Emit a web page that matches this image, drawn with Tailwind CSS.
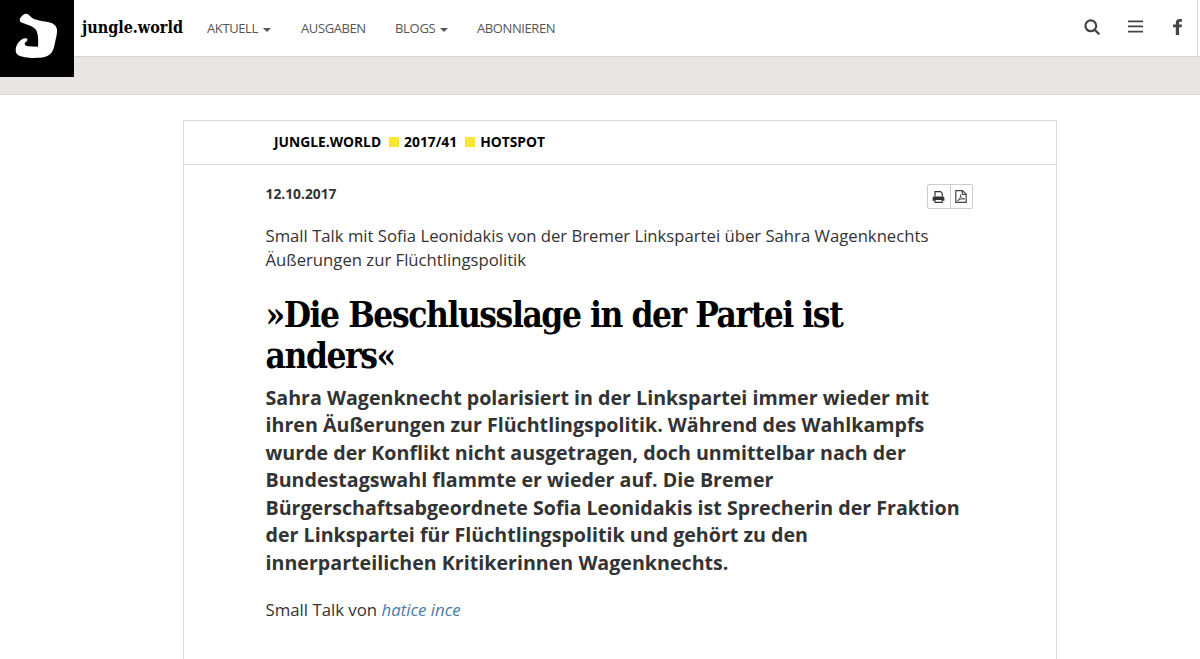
<!DOCTYPE html>
<html lang="de">

<head>
  <meta charset="UTF-8">
  <meta name="viewport" content="width=device-width, initial-scale=1.0">
  <title>jungle.world</title>
  <script src="https://cdn.jsdelivr.net/npm/@tailwindcss/browser@4"></script>
</head>

<body class="h-[659px] overflow-hidden bg-white font-['Open_Sans',sans-serif] text-[#333]">
  <header class="relative h-[95px] border-b border-[#dcd8d8] bg-[#e9e5e5]">
    <nav class="flex h-[57px] items-center border-b border-[#d3d3d3] bg-white pl-[82px] text-[13px] text-[#555]">
      <a class="w-[125px] whitespace-nowrap font-['DejaVu_Serif_Condensed','DejaVu_Serif',serif] text-[16px] font-bold text-black [font-stretch:condensed]">jungle.world</a>
      <a class="flex w-[94px] items-center gap-[5px] pt-px tracking-[-0.4px]">AKTUELL
        <span class="mt-0.5 border-x-4 border-t-4 border-x-transparent border-t-[#555]"></span>
      </a>
      <a class="w-[94px] pt-px tracking-[-0.4px]">AUSGABEN</a>
      <a class="flex w-[82px] items-center gap-[5px] pt-px tracking-[-0.3px]">BLOGS
        <span class="mt-0.5 border-x-4 border-t-4 border-x-transparent border-t-[#555]"></span>
      </a>
      <a class="pt-px tracking-[-0.4px]">ABONNIEREN</a>
      <div class="mr-[2px] ml-auto flex h-full items-center border-r border-[#d3d3d3] pr-[15px] pb-[3px]">
        <svg class="mr-7 size-4" viewBox="0 0 16 16" fill="none" stroke="#444" stroke-width="2.2">
          <circle cx="6.8" cy="6.8" r="5.4" />
          <path d="M10.7 10.7L14.6 14.6" stroke-linecap="round" />
        </svg>
        <svg class="mr-[30px] h-[13px] w-[15px]" viewBox="0 0 15 13" fill="#444">
          <path d="M0 .5h15v1.800H0zM0 5.500h15v1.800H0zM0 10.700h15v1.800H0z" />
        </svg>
        <svg class="h-[16px] w-[9px]" viewBox="0 0 9 16" fill="#444">
          <path d="M9 .2v2.600H7.300C6.300 2.800 6.100 3.300 6.100 4v1.400H9L8.600 8.300H6.100V16H2.800V8.300H0V5.400h2.800V3.700C2.800 1.300 4.300 0 6.500 0 7.600 0 8.600.1 9 .2z" />
        </svg>
      </div>
    </nav>
    <!-- logo hangs over the grey bar -->
    <div class="absolute top-0 left-0 h-[77px] w-[74px] bg-black">
      <svg class="h-full w-full" viewBox="0 0 74 77" fill="#fff">
        <path d="M25.500 13.700C27.500 13.500 29 14.700 30.500 16.500C33 19.500 39 20.700 45 21.500C52 22.400 56 24.500 57 29.500C57.400 33.500 55.800 39 54.500 45C52.800 53.500 49 57.200 39 57.800C31 58.300 22 57.500 18 55C14.500 52.500 15.300 46.500 18.500 42.500C21 39.300 24.500 37.300 26.700 38.600C28.500 40 26.800 41.300 25.500 42.300C23.800 44 24.800 46 28 46.300L38 46.700C38.300 42 38.500 36 36.800 31.500C35 26.500 29 25.300 21.500 22.500C19 21.300 19.500 18.500 21.500 16.500C22.800 15 24 14 25.500 13.700Z" />
      </svg>
    </div>
  </header>

  <main class="mt-[25px] ml-[183px] h-[560px] w-[874px] border border-[#d9d9d9]">
    <div class="flex h-11 items-center border-b border-[#d9d9d9] pb-px pl-[90px] text-[13.800px] font-bold text-black">
      <a>JUNGLE.WORLD</a>
      <span class="mr-[5px] ml-2 size-2.5 bg-[#fbe62f]"></span>
      <a>2017/41</a>
      <span class="mr-[5px] ml-2 size-2.5 bg-[#fbe62f]"></span>
      <a>HOTSPOT</a>
    </div>
    <article class="pr-[83px] pl-[81.500px]">
      <div class="flex h-[59px] justify-between pt-[19px]">
        <time class="text-[13.800px] leading-5 font-bold">12.10.2017</time>
        <div class="flex h-[25px] w-[46px] rounded-xs border border-[#ccc]">
          <a class="flex flex-1 items-center justify-center border-r border-[#ccc]">
            <svg class="h-3 w-[13px]" viewBox="0 0 13 12">
              <path d="M3 5.500V.6h5.500l1.800 1.800v3.100" fill="none" stroke="#333" stroke-width="1.200" />
              <path d="M.6 7c0-1 .7-1.600 1.600-1.600h8.600c.9 0 1.600.6 1.600 1.600v2.700H.6z" fill="#333" />
              <path d="M3 8.500h7.200v2.900H3z" fill="#fff" stroke="#333" stroke-width="1.100" />
            </svg>
          </a>
          <a class="flex flex-1 items-center justify-center">
            <svg class="h-[13px] w-3" viewBox="0 0 12 13" fill="none" stroke="#444">
              <path d="M.8.6h6.700l3.700 3.700v8.100H.8zM7.300.7v3.800h3.800" stroke-width="1.200" />
              <path d="M2.500 10.800C4.800 9.500 5.900 6.800 5.500 4.700C5.200 6.800 7 9 9.600 9C7.300 8.500 4.500 9.200 2.500 10.800Z" stroke-width=".9" />
            </svg>
          </a>
        </div>
      </div>
      <p class="text-[16.710px] leading-[23.500px] whitespace-nowrap">Small Talk mit Sofia Leonidakis von der Bremer Linkspartei über Sahra Wagenknechts<br>Äußerungen zur Flüchtlingspolitik</p>
      <h1 class="mt-[23px] font-['DejaVu_Serif_Condensed','DejaVu_Serif',serif] text-[35px] leading-[41px] font-bold tracking-[-1.45px] whitespace-nowrap text-black [font-stretch:condensed]">»Die Beschlusslage in der Partei ist<br>anders«</h1>
      <p class="mt-[7.500px] text-[19.650px] leading-[27.500px] font-bold whitespace-nowrap">Sahra Wagenknecht polarisiert in der Linkspartei immer wieder mit<br>ihren Äußerungen zur Flüchtlingspolitik. Während des Wahlkampfs<br>wurde der Konflikt nicht ausgetragen, doch unmittelbar nach der<br>Bundestagswahl flammte er wieder auf. Die Bremer<br>Bürgerschaftsabgeordnete Sofia Leonidakis ist Sprecherin der Fraktion<br>der Linkspartei für Flüchtlingspolitik und gehört zu den<br>innerparteilichen Kritikerinnen Wagenknechts.</p>
      <p class="mt-[22px] text-[16.800px] leading-6">Small Talk von <a class="text-[#4a7ba6] italic">hatice ince</a></p>
    </article>
  </main>
</body>

</html>
